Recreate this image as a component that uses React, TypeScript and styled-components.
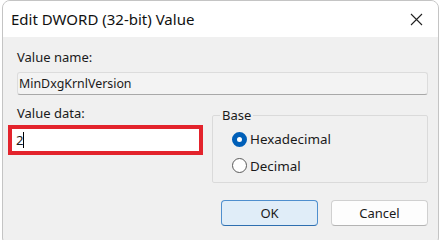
import React from 'react';
import styled, { createGlobalStyle } from 'styled-components';

const GlobalStyle = createGlobalStyle`
  html, body {
    margin: 0;
    padding: 0;
    background: #ffffff;
  }
  body {
    font-family: 'Noto Sans', 'Open Sans', sans-serif;
    color: #1a1a1a;
  }
`;

const Window = styled.div`
  box-sizing: border-box;
  width: 437px;
  height: 246px;
  margin-left: 2px;
  border: 1px solid #c4c4c4;
  border-radius: 8px;
  overflow: hidden;
  background: #f0f0f0;
  display: flex;
  flex-direction: column;
`;

const TitleBar = styled.div`
  height: 36px;
  flex: none;
  background: #ffffff;
  display: flex;
  align-items: center;
  justify-content: space-between;
  padding: 0 10px 0 8px;
`;

const Title = styled.span`
  font-size: 15px;
  color: #111;
`;

const CloseButton = styled.button`
  width: 24px;
  height: 24px;
  border: none;
  background: transparent;
  padding: 0;
  display: flex;
  align-items: center;
  justify-content: center;
`;

const Body = styled.div`
  flex: 1;
  padding: 12px 10px 0 12px;
  display: flex;
  flex-direction: column;
`;

const Label = styled.div`
  font-size: 13px;
  line-height: 16px;
  padding-left: 2px;
  color: #1a1a1a;
`;

const NameField = styled.div`
  box-sizing: border-box;
  margin-top: 7px;
  height: 23px;
  margin-left: 2px;
  background: #f3f3f3;
  border: 1px solid #dcdcdc;
  border-bottom-color: #a8a8a8;
  border-radius: 3px;
  font-size: 12.4px;
  line-height: 21px;
  padding-left: 1px;
`;

const Row = styled.div`
  display: flex;
  margin-top: 7px;
  gap: 9px;
`;

const DataColumn = styled.div`
  display: flex;
  flex-direction: column;
  width: 195px;
  flex: none;
  margin-left: -7px;
`;

const DataLabel = styled(Label)`
  padding-left: 9px;
  margin-top: 3px;
`;

const Highlight = styled.div`
  box-sizing: border-box;
  margin-top: 4px;
  height: 30px;
  border: 4px solid #e3232c;
  background: #ffffff;
  display: flex;
  align-items: center;
  padding-left: 4px;
  font-size: 13px;
`;

const Caret = styled.span`
  display: inline-block;
  width: 1px;
  height: 16px;
  background: #000;
`;

const RightColumn = styled.div`
  flex: 1;
  display: flex;
  flex-direction: column;
`;

const GroupBox = styled.fieldset`
  box-sizing: border-box;
  margin: 6px 0 0 0;
  height: 75px;
  border: 1px solid #dadada;
  border-radius: 2px;
  padding: 4px 0 0 19px;
`;

const Legend = styled.legend`
  font-size: 13px;
  padding: 0 2px;
  margin-left: -12px;
  line-height: 14px;
`;

const RadioRow = styled.label`
  display: flex;
  align-items: center;
  height: 26.5px;
  font-size: 13.4px;
  gap: 3px;
`;

const RadioDot = styled.span<{ $checked?: boolean }>`
  box-sizing: border-box;
  width: 15px;
  height: 15px;
  border-radius: 50%;
  border: ${(p) => (p.$checked ? '5px solid #005fb8' : '1px solid #5a5a5a')};
  background: #ffffff;
`;

const Buttons = styled.div`
  display: flex;
  justify-content: flex-end;
  gap: 13px;
  margin-top: 17px;
`;

const Button = styled.button<{ $primary?: boolean }>`
  box-sizing: border-box;
  width: 97px;
  height: 26px;
  border-radius: 4px;
  font-family: inherit;
  font-size: 13px;
  color: #1a1a1a;
  background: ${(p) => (p.$primary ? '#e0edf8' : '#fdfdfd')};
  border: 1px solid ${(p) => (p.$primary ? '#4f8fce' : '#d0d0d0')};
  border-bottom-color: ${(p) => (p.$primary ? '#2e6fb0' : '#b4b4b4')};
`;

export default function App() {
  return (
    <>
      <GlobalStyle />
      <Window>
        <TitleBar>
          <Title>Edit DWORD (32-bit) Value</Title>
          <CloseButton aria-label="Close">
            <svg width="13" height="13" viewBox="0 0 13 13">
              <path d="M1 1 L12 12 M12 1 L1 12" stroke="#222" strokeWidth="1.1" />
            </svg>
          </CloseButton>
        </TitleBar>
        <Body>
          <Label>Value name:</Label>
          <NameField>MinDxgKrnlVersion</NameField>
          <Row>
            <DataColumn>
              <DataLabel>Value data:</DataLabel>
              <Highlight>
                2<Caret />
              </Highlight>
            </DataColumn>
            <RightColumn>
              <GroupBox>
                <Legend>Base</Legend>
                <RadioRow>
                  <RadioDot $checked />
                  Hexadecimal
                </RadioRow>
                <RadioRow>
                  <RadioDot />
                  Decimal
                </RadioRow>
              </GroupBox>
              <Buttons>
                <Button $primary>OK</Button>
                <Button>Cancel</Button>
              </Buttons>
            </RightColumn>
          </Row>
        </Body>
      </Window>
    </>
  );
}
